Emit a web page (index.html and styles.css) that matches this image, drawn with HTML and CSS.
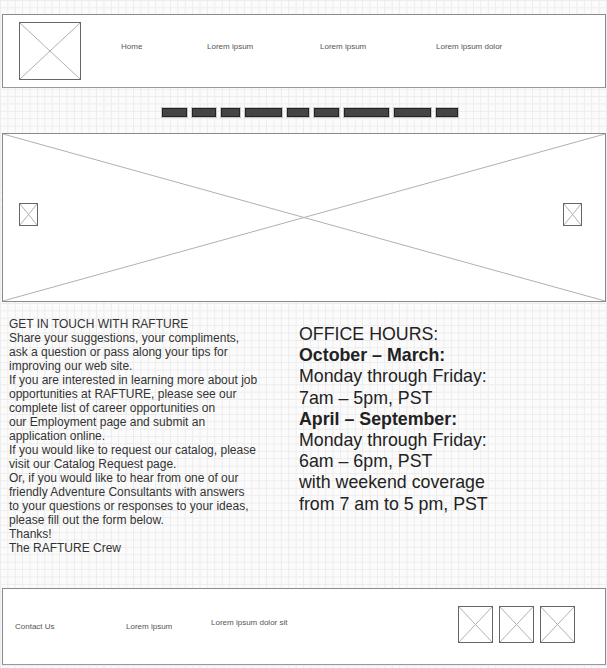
FILE: index.html
```html
<!DOCTYPE html>
<html>
<head>
<meta charset="utf-8">
<title>Contact RAFTURE</title>
<link rel="stylesheet" href="styles.css">
</head>
<body>
<div class="page">
  <header class="header">
    <svg class="ph logo" viewBox="0 0 100 100" preserveAspectRatio="none"><line x1="0" y1="0" x2="100" y2="100"/><line x1="100" y1="0" x2="0" y2="100"/></svg>
    <nav class="nav">
      <span>Home</span>
      <span>Lorem ipsum</span>
      <span>Lorem ipsum</span>
      <span>Lorem ipsum dolor</span>
    </nav>
  </header>

  <div class="pager">
    <span class="bar w25"></span>
    <span class="bar w24"></span>
    <span class="bar w19"></span>
    <span class="bar w37"></span>
    <span class="bar w22"></span>
    <span class="bar w25"></span>
    <span class="bar w45"></span>
    <span class="bar w37"></span>
    <span class="bar w22"></span>
  </div>

  <section class="hero">
    <svg class="hero-x" viewBox="0 0 100 100" preserveAspectRatio="none"><line x1="0" y1="0" x2="100" y2="100"/><line x1="100" y1="0" x2="0" y2="100"/></svg>
    <svg class="ph arrow" viewBox="0 0 100 100" preserveAspectRatio="none"><line x1="0" y1="0" x2="100" y2="100"/><line x1="100" y1="0" x2="0" y2="100"/></svg>
    <svg class="ph arrow" viewBox="0 0 100 100" preserveAspectRatio="none"><line x1="0" y1="0" x2="100" y2="100"/><line x1="100" y1="0" x2="0" y2="100"/></svg>
  </section>

  <main class="content">
    <div class="touch">
      <p>GET IN TOUCH WITH RAFTURE</p>
      <p>Share your suggestions, your compliments,</p>
      <p>ask a question or pass along your tips for</p>
      <p>improving our web site.</p>
      <p>If you are interested in learning more about job</p>
      <p>opportunities at RAFTURE, please see our</p>
      <p>complete list of career opportunities on</p>
      <p>our Employment page and submit an</p>
      <p>application online.</p>
      <p>If you would like to request our catalog, please</p>
      <p>visit our Catalog Request page.</p>
      <p>Or, if you would like to hear from one of our</p>
      <p>friendly Adventure Consultants with answers</p>
      <p>to your questions or responses to your ideas,</p>
      <p>please fill out the form below.</p>
      <p>Thanks!</p>
      <p>The RAFTURE Crew</p>
    </div>
    <div class="hours">
      <p>OFFICE HOURS:</p>
      <p class="b">October – March:</p>
      <p>Monday through Friday:</p>
      <p>7am – 5pm, PST</p>
      <p class="b">April – September:</p>
      <p>Monday through Friday:</p>
      <p>6am – 6pm, PST</p>
      <p>with weekend coverage</p>
      <p>from 7 am to 5 pm, PST</p>
    </div>
  </main>

  <footer class="footer">
    <span class="f-link f-contact">Contact Us</span>
    <span class="f-link f-lorem">Lorem ipsum</span>
    <span class="f-link f-dolor">Lorem ipsum dolor sit</span>
    <div class="socials">
      <svg class="ph social" viewBox="0 0 100 100" preserveAspectRatio="none"><line x1="0" y1="0" x2="100" y2="100"/><line x1="100" y1="0" x2="0" y2="100"/></svg>
      <svg class="ph social" viewBox="0 0 100 100" preserveAspectRatio="none"><line x1="0" y1="0" x2="100" y2="100"/><line x1="100" y1="0" x2="0" y2="100"/></svg>
      <svg class="ph social" viewBox="0 0 100 100" preserveAspectRatio="none"><line x1="0" y1="0" x2="100" y2="100"/><line x1="100" y1="0" x2="0" y2="100"/></svg>
    </div>
  </footer>
</div>
</body>
</html>
```
FILE: styles.css
```css
html, body {
  margin: 0;
  padding: 0;
}

body {
  background-color: #fbfbfb;
  background-image:
    linear-gradient(to right, #ececec 1px, transparent 1px),
    linear-gradient(to bottom, #ececec 1px, transparent 1px);
  background-size: 7.4px 7.4px;
  font-family: "Liberation Sans", Arial, sans-serif;
  color: #333;
  min-height: 668px;
}

.page {
  padding: 14px 1px 4px 2px;
}

.ph {
  display: block;
  box-sizing: border-box;
  border: 1px solid #666;
  background: #fff;
}
.ph line,
.hero-x line {
  stroke: #b0b0b0;
  stroke-width: 1;
  vector-effect: non-scaling-stroke;
}

/* header */
.header {
  box-sizing: border-box;
  height: 74px;
  border: 1px solid #8a8a8a;
  border-bottom-color: #999;
  background: #fff;
  display: flex;
  align-items: flex-start;
}
.logo {
  width: 62px;
  height: 58px;
  margin: 7px 0 0 16px;
}
.nav {
  display: grid;
  grid-template-columns: 86px 113px 116px auto;
  margin: 27px 0 0 40px;
  font-size: 8px;
  line-height: 10px;
  color: #555;
}

/* pager */
.pager {
  display: flex;
  gap: 5px;
  margin-top: 20px;
  padding-left: 160px;
}
.bar {
  box-sizing: border-box;
  height: 9px;
  background: #444;
  border: 1px solid #222;
  box-shadow: 0 0 0 1px #c8c8c8;
}
.w19 { width: 19px; }
.w22 { width: 22px; }
.w24 { width: 24px; }
.w25 { width: 25px; }
.w37 { width: 37px; }
.w45 { width: 45px; }

/* hero */
.hero {
  position: relative;
  box-sizing: border-box;
  height: 169px;
  margin-top: 16px;
  border: 1px solid #8a8a8a;
  background: #fff;
  display: flex;
  justify-content: space-between;
  align-items: center;
  padding: 0 23px 6px 16px;
}
.hero-x {
  position: absolute;
  inset: 0;
  width: 100%;
  height: 100%;
}
.arrow {
  position: relative;
  width: 19px;
  height: 23px;
}

/* content */
.content {
  display: grid;
  grid-template-columns: 290px 1fr;
  padding-left: 7px;
}
.content p {
  margin: 0;
  white-space: nowrap;
}
.touch {
  padding-top: 15px;
  font-size: 12px;
  line-height: 14px;
  color: #333;
}
.hours {
  padding-top: 22px;
  font-size: 17.8px;
  line-height: 21.2px;
  color: #222;
}
.hours .b {
  font-weight: bold;
}

/* footer */
.footer {
  box-sizing: border-box;
  height: 77px;
  margin-top: 33px;
  border: 1px solid #8a8a8a;
  border-bottom-color: #999;
  background: #fff;
  display: flex;
  align-items: center;
  padding: 0 30px 5px 12px;
  font-size: 8px;
  line-height: 10px;
  color: #555;
}
.f-contact {
  width: 111px;
  margin-top: 5px;
}
.f-lorem {
  width: 85px;
  margin-top: 5px;
}
.f-dolor {
  margin-top: -3px;
}
.socials {
  margin-left: auto;
  display: flex;
  gap: 6px;
}
.social {
  width: 35px;
  height: 37px;
}
```
